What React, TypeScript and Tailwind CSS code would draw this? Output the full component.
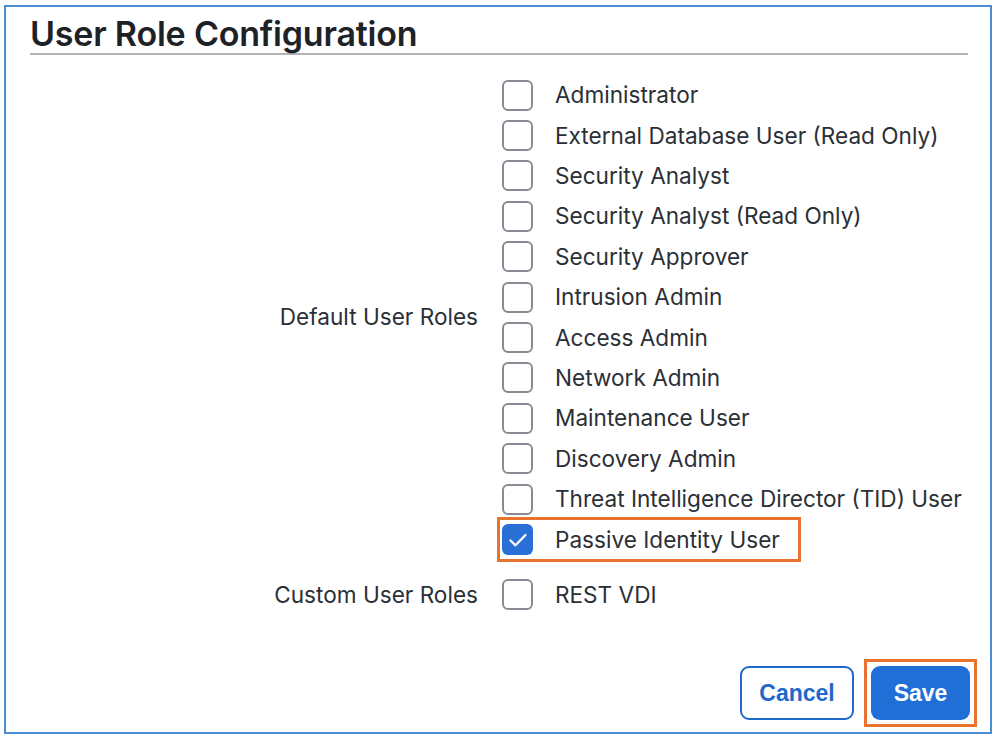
import { useState } from "react";

const DEFAULT_ROLES = [
  "Administrator",
  "External Database User (Read Only)",
  "Security Analyst",
  "Security Analyst (Read Only)",
  "Security Approver",
  "Intrusion Admin",
  "Access Admin",
  "Network Admin",
  "Maintenance User",
  "Discovery Admin",
  "Threat Intelligence Director (TID) User",
  "Passive Identity User",
];

const HIGHLIGHTED = "Passive Identity User";

function Checkbox({ checked }: { checked: boolean }) {
  if (checked) {
    return (
      <span className="flex h-[31px] w-[31px] shrink-0 items-center justify-center rounded-[6px] bg-[#2a6fd6]">
        <svg width="24" height="24" viewBox="0 0 24 24" fill="none">
          <path d="M4.5 12.5l5 4.8 10-10.3" stroke="#fff" strokeWidth="2.3" strokeLinecap="round" strokeLinejoin="round" />
        </svg>
      </span>
    );
  }
  return <span className="h-[31px] w-[31px] shrink-0 rounded-[6px] border-2 border-[#878c94] bg-white" />;
}

function RoleRow({ label, checked, highlight }: { label: string; checked: boolean; highlight?: boolean }) {
  return (
    <div className="flex h-[40.4px] items-center">
      <div
        className={
          highlight
            ? "-ml-[5px] flex h-[45px] items-center gap-[22px] border-[3px] border-[#e8732e] pl-[2px] pr-[18px]"
            : "flex items-center gap-[22px]"
        }
      >
        <Checkbox checked={checked} />
        <span className="whitespace-nowrap text-[22.6px] text-[#2b2f36]">{label}</span>
      </div>
    </div>
  );
}

export default function App() {
  const [checked] = useState<Record<string, boolean>>({ [HIGHLIGHTED]: true });

  return (
    <div className="h-[740px] w-[999px] bg-white pl-[4px] pt-[5px] font-['Inter',sans-serif]">
      <div className="flex h-[729px] w-[988px] flex-col border-2 border-[#4a8fd4] pl-[24px] pr-[22px]">
        <div className="border-b-2 border-[#b3b3b3] pb-[2px] pt-[10px]">
          <h1 className="text-[34px] font-semibold leading-[34px] tracking-[-0.2px] text-[#1e2126]">
            User Role Configuration
          </h1>
        </div>

        <div className="mt-[20px] flex">
          <div className="flex w-[448px] items-center justify-end text-[22.6px] text-[#2b2f36]">
            Default User Roles
          </div>
          <div className="ml-[24px] flex flex-col">
            {DEFAULT_ROLES.map((role) => (
              <RoleRow key={role} label={role} checked={!!checked[role]} highlight={role === HIGHLIGHTED} />
            ))}
          </div>
        </div>

        <div className="mt-[15px] flex">
          <div className="flex w-[448px] items-center justify-end text-[22.6px] text-[#2b2f36]">Custom User Roles</div>
          <div className="ml-[24px] flex flex-col">
            <RoleRow label="REST VDI" checked={false} />
          </div>
        </div>

        <div className="-mr-[2px] mt-auto flex justify-end gap-[10px] pb-[12px]">
          <button className="h-[54px] w-[114px] rounded-[9px] border-2 border-[#2068cc] bg-white font-['Liberation_Sans',sans-serif] text-[23px] font-bold text-[#2068cc]">
            Cancel
          </button>
          <div className="-my-[7px] -mr-[7px] border-[3px] border-[#e8732e] p-[4px]">
            <button className="h-[54px] w-[99px] rounded-[9px] bg-[#206fd6] font-['Liberation_Sans',sans-serif] text-[23px] font-bold text-white">
              Save
            </button>
          </div>
        </div>
      </div>
    </div>
  );
}
